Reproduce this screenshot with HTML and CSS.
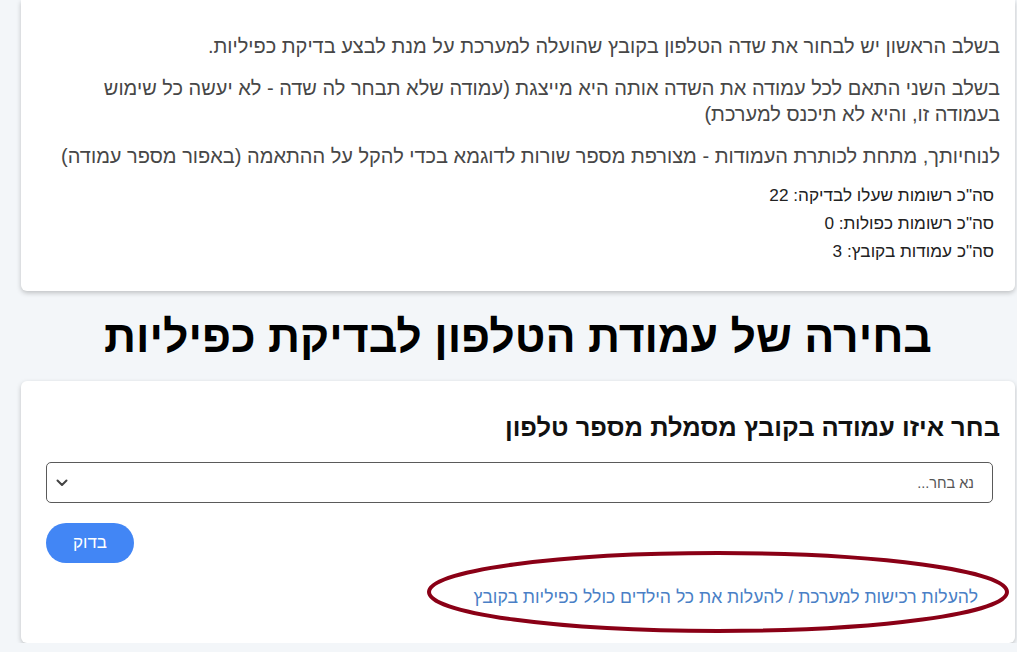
FILE: index.html
```html
<!DOCTYPE html>
<html lang="he" dir="rtl">
<head>
<meta charset="utf-8">
<title>בדיקת כפיליות</title>
<link rel="stylesheet" href="styles.css">
</head>
<body>
<div class="page">
  <section class="card card-info">
    <p class="para">בשלב הראשון יש לבחור את שדה הטלפון בקובץ שהועלה למערכת על מנת לבצע בדיקת כפיליות.</p>
    <p class="para">בשלב השני התאם לכל עמודה את השדה אותה היא מייצגת (עמודה שלא תבחר לה שדה - לא יעשה כל שימוש בעמודה זו, והיא לא תיכנס למערכת)</p>
    <p class="para para-last">לנוחיותך, מתחת לכותרת העמודות - מצורפת מספר שורות לדוגמא בכדי להקל על ההתאמה (באפור מספר עמודה)</p>
    <div class="totals">
      <div class="total">סה"כ רשומות שעלו לבדיקה: 22</div>
      <div class="total">סה"כ רשומות כפולות: 0</div>
      <div class="total">סה"כ עמודות בקובץ: 3</div>
    </div>
  </section>

  <h1 class="page-title">בחירה של עמודת הטלפון לבדיקת כפיליות</h1>

  <section class="card card-form">
    <h2 class="form-title">בחר איזו עמודה בקובץ מסמלת מספר טלפון</h2>
    <div class="select">
      <span class="select-placeholder">נא בחר...</span>
      <svg class="chevron" width="12" height="8" viewBox="0 0 12 8"><path d="M1.5 1.5 L6 6 L10.5 1.5" fill="none" stroke="#444" stroke-width="2" stroke-linecap="round" stroke-linejoin="round"/></svg>
    </div>
    <div class="actions">
      <button class="btn">בדוק</button>
    </div>
    <div class="links">
      <a class="link" href="#">להעלות רכישות למערכת</a>
      <span class="sep">/</span>
      <a class="link" href="#">להעלות את כל הילדים כולל כפיליות בקובץ</a>
    </div>
    <svg class="annotation" width="590" height="86" viewBox="0 0 590 86"><ellipse cx="295" cy="43" rx="289" ry="39" fill="none" stroke="#8a0016" stroke-width="4"/></svg>
  </section>
</div>
</body>
</html>
```

FILE: styles.css
```css
html, body {
  margin: 0;
  padding: 0;
  background: #f3f6f9;
  font-family: "Liberation Sans", Arial, sans-serif;
  overflow: hidden;
}
.page {
  margin: 0 2px 0 21px;
  display: flex;
  flex-direction: column;
}
.card {
  background: #fff;
  border-radius: 6px;
  box-shadow: 0 2px 5px rgba(0, 0, 0, 0.22);
  position: relative;
}
.card-info {
  border-radius: 0 0 6px 6px;
  padding: 33px 15px 26px 25px;
}
.para {
  margin: 0 0 16px 0;
  font-size: 20px;
  line-height: 26px;
  color: #474747;
}
.para-last {
  margin-bottom: 12px;
}
.totals {
  padding-right: 6px;
}
.total {
  font-size: 17.2px;
  line-height: 28px;
  color: #222;
}
.page-title {
  margin: 19px 0 18px 0;
  text-align: center;
  font-size: 44.6px;
  line-height: 53px;
  font-weight: 900;
  color: #000;
}
.card-form {
  padding: 31px 15px 33px 25px;
  display: flex;
  flex-direction: column;
}
.form-title {
  margin: 0 0 20px 0;
  font-size: 25.5px;
  line-height: 30px;
  font-weight: bold;
  color: #111;
}
.select {
  margin-right: 7px;
  height: 39px;
  border: 1px solid #5a5a5a;
  border-radius: 5px;
  display: flex;
  align-items: center;
  justify-content: space-between;
  padding: 0 18px 0 9px;
}
.select-placeholder {
  font-size: 14.5px;
  color: #555;
}
.chevron {
  display: block;
}
.actions {
  margin-top: 20px;
  display: flex;
  justify-content: flex-end;
}
.btn {
  width: 88px;
  height: 40px;
  border: none;
  border-radius: 20px;
  background: #4286f5;
  color: #fff;
  font-family: "Liberation Sans", Arial, sans-serif;
  font-size: 17px;
}
.links {
  margin-top: 21px;
  padding-right: 22px;
  font-size: 17.6px;
  line-height: 26px;
  color: #4a7fc6;
}
.link {
  color: #4a7fc6;
  text-decoration: none;
}
.annotation {
  position: absolute;
  left: 402px;
  top: 168px;
}
```
